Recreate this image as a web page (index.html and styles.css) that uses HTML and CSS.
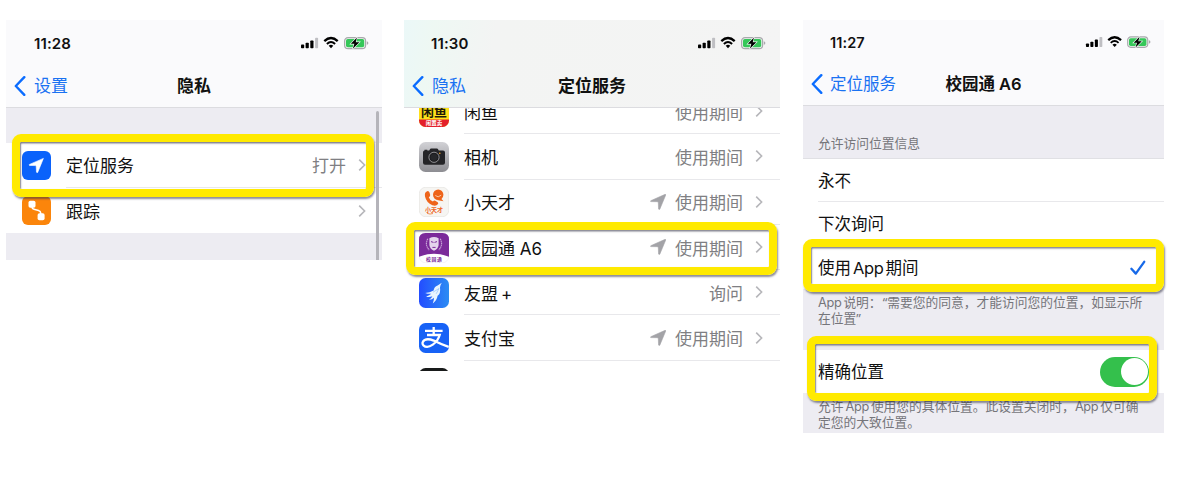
FILE: index.html
```html
<!DOCTYPE html>
<html lang="zh-CN">
<head>
<meta charset="utf-8">
<title>定位服务</title>
<link rel="stylesheet" href="styles.css">
</head>
<body>
<svg width="0" height="0" class="defs">
  <symbol id="status" viewBox="0 0 69 14">
    <rect x="1" y="8.6" width="3.2" height="3.6" rx=".8"/>
    <rect x="5.6" y="6.8" width="3.2" height="5.4" rx=".8"/>
    <rect x="10.3" y="4.4" width="3.2" height="7.8" rx=".8"/>
    <rect x="15.1" y="1.8" width="3" height="10.4" rx=".8" fill="#bfbfc3"/>
    <path d="M24.3 5.1Q31 -1 37.7 5.1" fill="none" stroke="#000" stroke-width="2.3"/>
    <path d="M26.9 7.9Q31 4.2 35.1 7.9" fill="none" stroke="#000" stroke-width="2"/>
    <path d="M28.7 9.8Q31 7.9 33.3 9.8L31 12.2Z"/>
    <rect x="44.6" y="1.6" width="21" height="11" rx="3.4" fill="#eef3ef" stroke="#a9a9ad" stroke-width="1.2"/>
    <rect x="46" y="3" width="18.2" height="8.2" rx="1.8" fill="#35c759"/>
    <path d="M66.8 5.2Q68.4 5.6 68.4 7T66.8 8.8Z" fill="#a9a9ad"/>
    <path d="M57 1.4L50.8 7.8H54.4L52.8 12.8L59.4 6.2H55.7Z" stroke="#fff" stroke-width="1.2" paint-order="stroke"/>
  </symbol>
  <symbol id="back" viewBox="0 0 12 20"><path d="M10.3 1.2L1.8 10L10.3 18.8" fill="none" stroke="#0a6cff" stroke-width="2.4" stroke-linecap="round" stroke-linejoin="round"/></symbol>
  <symbol id="chev" viewBox="0 0 8 14"><path d="M1.2 1.6L6.6 7L1.2 12.4" fill="none" stroke="#b6b6ba" stroke-width="1.6"/></symbol>
  <symbol id="loc" viewBox="0 0 16 16"><path d="M15.2 .3Q16 .2 15.7 1L9.8 15.2Q9.1 16 8.6 15.1L8.3 8.6Q8.2 7.8 7.4 7.7L.8 7.6Q0 7.2 .8 6.7Z" fill="#a3a3a7" stroke="#a3a3a7" stroke-width=".6"/></symbol>
</svg>
<main class="board">
  <section class="phone privacy">
    <header class="head">
      <div class="status"><span class="time">11:28</span><svg class="signals"><use href="#status"/></svg></div>
      <div class="nav"><span class="back"><svg><use href="#back"/></svg>设置</span><span class="title">隐私</span></div>
    </header>
    <div class="gap"></div>
    <div class="rows">
      <div class="row">
        <svg class="icon" viewBox="0 0 29 29"><rect width="29" height="29" rx="6" fill="#0a62fb"/><path d="M21.4 7.4L15.7 21.4Q15 22 14.5 21.2L14.2 15.4Q14.1 14.7 13.4 14.6L7.5 14.4Q6.7 13.9 7.5 13.4Z" fill="#fff" stroke="#fff" stroke-width=".6"/></svg>
        <div class="cell"><span>定位服务</span><span class="value">打开</span><svg class="chev"><use href="#chev"/></svg></div>
      </div>
      <div class="row">
        <svg class="icon" viewBox="0 0 29 29"><rect width="29" height="29" rx="6" fill="#fb850b"/><path d="M10 8.5V11Q10 12.8 12 13.3L16.5 14.5Q18.7 15.2 18.7 17V20" fill="none" stroke="#fff" stroke-width="1.5"/><rect x="6.5" y="4.7" width="7" height="7" rx="1.8" fill="#fff"/><rect x="15.6" y="17.2" width="7" height="7" rx="1.8" fill="#fff"/></svg>
        <div class="cell"><span>跟踪</span><svg class="chev"><use href="#chev"/></svg></div>
      </div>
    </div>
    <i class="scrollbar"></i>
    <i class="mark mark-location"></i>
  </section>

  <section class="phone services">
    <header class="head">
      <div class="status"><span class="time">11:30</span><svg class="signals"><use href="#status"/></svg></div>
      <div class="nav"><span class="back"><svg><use href="#back"/></svg>隐私</span><span class="title">定位服务</span></div>
    </header>
    <div class="viewport"><div class="rows">
      <div class="row">
        <svg class="icon" viewBox="0 0 30 30"><defs><clipPath id="r"><rect width="30" height="30" rx="6.5"/></clipPath></defs><g clip-path="url(#r)"><rect width="30" height="30" fill="#ffe11a"/><path d="M0 22.5H30V30H0Z" fill="#e3202b"/></g><text x="15" y="18.8" class="fish">闲鱼</text><text x="15" y="28.3" class="fish-sub">闲置卖</text></svg>
        <div class="cell"><span>闲鱼</span><span class="value">使用期间</span><svg class="chev"><use href="#chev"/></svg></div>
      </div>
      <div class="row">
        <svg class="icon" viewBox="0 0 30 30"><defs><linearGradient id="cg" x2="0" y2="1"><stop stop-color="#d2d2d6"/><stop offset="1" stop-color="#8d8d92"/></linearGradient></defs><rect width="30" height="30" rx="6.5" fill="url(#cg)"/><path d="M5.5 8.5V7.7H8.3V8.5H10.2L11.3 6.8Q11.6 6.4 12.2 6.4H17.8Q18.4 6.4 18.7 6.8L19.8 8.5H24Q26 8.5 26 10.5V20.8Q26 22.8 24 22.8H6Q4 22.8 4 20.8V10.5Q4 8.5 5.5 8.5Z" fill="#242427"/><circle cx="15" cy="15.3" r="5.1" fill="#1d1d20" stroke="#aaa9ad" stroke-width=".8"/><circle cx="15" cy="15.3" r="3.4" fill="#26272a"/><circle cx="20.8" cy="11.3" r=".8" fill="#f5a623"/></svg>
        <div class="cell"><span>相机</span><span class="value">使用期间</span><svg class="chev"><use href="#chev"/></svg></div>
      </div>
      <div class="row">
        <svg class="icon" viewBox="0 0 30 30"><rect x=".3" y=".3" width="29.4" height="29.4" rx="6.3" fill="#f6f5f2" stroke="#e0dfdc" stroke-width=".6"/><path d="M8.2 4.2Q9.8 3.7 10.5 5.6L11.2 8Q11.4 9.4 9.8 10.2Q10.7 13.2 13.9 14.6Q15 13.2 16.2 13.7L18.7 15.2Q19.8 16 18.8 17.3Q17 19.5 13.4 18.2Q7.5 15.8 6 9.4Q5.3 5.3 8.2 4.2Z" fill="#ee641a"/><circle cx="19.2" cy="7.7" r="5.2" fill="#ee641a"/><path d="M21.5 11L24.5 14.3L18 13Z" fill="#ee641a"/><path d="M16.3 8.5Q19 11.3 22.2 8.2" fill="none" stroke="#fbc9a5"/><text x="15" y="25.3" class="genius">小天才</text><path d="M8 26.3Q11 27.7 14 26.5" fill="none" stroke="#ee641a" stroke-width=".7"/></svg>
        <div class="cell"><span>小天才</span><svg class="loc"><use href="#loc"/></svg><span class="value">使用期间</span><svg class="chev"><use href="#chev"/></svg></div>
      </div>
      <div class="row">
        <svg class="icon" viewBox="0 0 30 30"><rect x=".2" y=".2" width="29.6" height="29.6" rx="6.4" fill="#fff" stroke="#e5e0e8" stroke-width=".4"/><path d="M0 23.8V6.5Q0 0 6.5 0H23.5Q30 0 30 6.5V23.8Q15 17.8 0 23.8Z" fill="#7b2a9a"/><path d="M10.4 5.2Q15 2.8 19.6 5.2V12Q19.2 16 15 17.7Q10.8 16 10.4 12Z" fill="#e4d5ec"/><path d="M12 8.6L14.5 9.4M18 8.6L15.5 9.4M13.4 14.4H16.6" stroke="#7b2a9a" fill="none"/><path d="M8.8 5.7Q5.4 12 10.3 17M21.2 5.7Q24.6 12 19.7 17" fill="none" stroke="#c7a2d7" stroke-width="1.2" stroke-dasharray="1.5 .5"/><text x="15.3" y="27.5" class="campus">校园通</text></svg>
        <div class="cell"><span>校园通 A6</span><svg class="loc"><use href="#loc"/></svg><span class="value">使用期间</span><svg class="chev"><use href="#chev"/></svg></div>
      </div>
      <div class="row">
        <svg class="icon" viewBox="0 0 30 30"><defs><linearGradient id="ug" x2="1" y2="0"><stop stop-color="#234dff"/><stop offset="1" stop-color="#2c8cf3"/></linearGradient></defs><rect width="30" height="30" rx="6.5" fill="url(#ug)"/><path d="M22.8 4.8L18.6 7.4Q15.2 8.4 14.6 12.6Q10.7 14.8 6.2 14.9Q8.8 16 12.3 15.8Q9.5 18.1 7.1 18.5Q10 19.7 13.4 18.2Q12.4 20.5 10.1 21.7Q13 21.8 15 19.8Q15.1 22.3 13.8 25.4Q17.9 22.3 18.6 17.8Q21.9 15.4 21 9.4Q21.2 7.1 22.8 4.8Z" fill="#e9f5ff"/><path d="M14 14.2L20 10.5L17.2 15.8" fill="none" stroke="#85bafb" stroke-width=".6"/></svg>
        <div class="cell"><span>友盟<b class="plus">+</b></span><span class="value">询问</span><svg class="chev"><use href="#chev"/></svg></div>
      </div>
      <div class="row">
        <svg class="icon" viewBox="0 0 30 30"><rect width="30" height="30" rx="6.5" fill="#1762f6"/><path d="M14.7 4V11.7M6 7.8H23.6M8 12H20.7Q18.8 18.2 13.8 21.6Q8 25.7 4.4 22.3Q2.2 19.5 5.6 17Q9 15.2 14.7 17.6Q20.5 20.7 29.7 23.8" fill="none" stroke="#fff" stroke-width="2.3"/></svg>
        <div class="cell"><span>支付宝</span><svg class="loc"><use href="#loc"/></svg><span class="value">使用期间</span><svg class="chev"><use href="#chev"/></svg></div>
      </div>
      <div class="row"><svg class="icon" viewBox="0 0 30 30"><rect width="30" height="30" rx="6.5" fill="#181a1a"/></svg></div>
    </div></div>
    <i class="mark mark-campus"></i>
  </section>

  <section class="phone detail">
    <header class="head">
      <div class="status"><span class="time">11:27</span><svg class="signals"><use href="#status"/></svg></div>
      <div class="nav"><span class="back"><svg><use href="#back"/></svg>定位服务</span><span class="title">校园通 A6</span></div>
    </header>
    <h2 class="caption">允许访问位置信息</h2>
    <div class="options">
      <div class="option">永不</div>
      <div class="option">下次询问</div>
      <div class="option"><span>使用<span class="latin">App</span>期间</span><svg class="check" viewBox="0 0 16 16"><path d="M1.4 8.8L5.8 13.6L14.2 1.8" fill="none" stroke="#1769e8" stroke-width="2.3" stroke-linecap="round" stroke-linejoin="round"/></svg></div>
    </div>
    <p class="note note-reason"><span class="latin first">App</span>说明：<span class="quote open">“</span>需要您的同意，才能访问您的位置，如显示所<br>在位置<span class="quote">”</span></p>
    <div class="options precise"><div class="option"><span>精确位置</span><span class="switch"></span></div></div>
    <p class="note">允许<span class="latin">App</span>使用您的具体位置。此设置关闭时，<span class="latin first">App</span>仅可确<br>定您的大致位置。</p>
    <i class="mark mark-while"></i>
    <i class="mark mark-precise"></i>
  </section>
</main>
</body>
</html>
```
FILE: styles.css
```css
* { box-sizing: border-box; }
body { margin: 0; background: #fff; color: #111; font: 17px/24px Inter, "Noto Sans CJK SC", sans-serif; }
.defs { position: absolute; }
.board { display: flex; align-items: flex-start; height: 500px; padding: 20px 0 0 6px; overflow: hidden; }
.phone { position: relative; flex: none; width: 376px; }
.privacy { height: 240px; background: #edecf2; }
.services { height: 351px; margin-left: 22px; background: #fff; }
.detail { width: 361px; height: 413px; margin-left: 23px; background: #edecf2; font-size: 16.5px; }

.head { height: 88px; background: #fafafc; border-bottom: 1.5px solid #dcdce0; }
.services .head { background: linear-gradient(100deg, #ebf8f8 0, #eef8f3 8%, #f3f4f3 24%, #f4f4f4 100%); }
.status { display: flex; justify-content: space-between; height: 46px; padding: 16px 13px 0 28px; }
.time { font-size: 15px; line-height: 15px; font-weight: 600; letter-spacing: .1px; }
.signals { width: 69px; height: 14px; }
.nav { display: grid; grid-template-columns: 1fr auto 1fr; align-items: center; height: 40px; white-space: nowrap; }
.back { display: flex; align-items: center; gap: 8px; padding-left: 8px; color: #1a72f2; }
.back svg { width: 12px; height: 20px; }
.title { font-weight: 600; }
.services .time { margin-left: -1px; }
.services .signals { margin-right: 1px; }

.gap { height: 35px; }
.row { display: flex; align-items: center; height: 45px; padding-left: 16px; background: #fff; }
.icon { flex: none; width: 29px; height: 29px; }
.cell { display: flex; flex: 1; align-items: center; align-self: stretch; margin-left: 15px; padding-right: 16px; border-bottom: 1.5px solid #e8e8eb; }
.cell > span { padding-top: 2px; }
.cell > :first-child { margin-right: auto; }
.value { color: #7f7f83; }
.loc { width: 16px; height: 16px; margin-right: 9px; }
.chev { width: 8px; height: 14px; margin-left: 12px; }
.privacy .row:last-child .cell { border-bottom: 0; }
.scrollbar { position: absolute; top: 91px; right: 3px; bottom: 0; width: 3px; border-radius: 2px 2px 0 0; background: #b5b4ba; }

.viewport { height: 262.5px; overflow: hidden; }
.viewport .rows { margin-top: -19px; }
.viewport .row { height: 45.3px; padding-left: 15px; }
.viewport .icon { width: 30px; height: 30px; }
.viewport .cell { padding-right: 17px; }
.viewport .cell > span { padding-top: 3px; }
.plus { margin-left: 3px; font-weight: 400; }
.fish, .fish-sub, .genius, .campus { text-anchor: middle; font-family: "Noto Sans CJK SC", sans-serif; font-weight: 700; }
.fish { font-size: 13px; fill: #1d1a08; }
.fish-sub { font-size: 5.5px; fill: #fff; }
.genius { font-size: 6px; fill: #ee641a; }
.campus { font-size: 4.8px; letter-spacing: .8px; fill: #7b2a9a; }

.detail .head { height: 85.5px; }
.detail .status { height: 44px; padding: 15px 13px 0 27px; }
.detail .time { font-size: 14.5px; }
.detail .signals { width: 66px; }
.detail .back { gap: 7px; }
.caption { display: flex; align-items: flex-end; height: 53.5px; margin: 0; padding: 0 15px 4px; border-bottom: 1px solid #e0e0e4; color: #75757a; font-size: 12.75px; line-height: 20px; font-weight: 400; }
.options { padding-left: 15px; background: #fff; }
.option { display: flex; align-items: center; justify-content: space-between; height: 43.4px; padding: 1px 18px 0 0; border-bottom: 1.5px solid #e8e8eb; }
.option:last-child { border-bottom: 0; }
.latin { margin: 0 2px; letter-spacing: -.35px; }
.latin.first { margin-left: 0; }
.quote { font-family: "Noto Sans", sans-serif; line-height: 1; }
.quote.open { margin-left: 1px; }
.check { width: 16px; height: 16px; }
.note { margin: 0; padding: 6.5px 0 0 15px; color: #75757a; font-size: 12.75px; line-height: 15.6px; white-space: nowrap; }
.note-reason { height: 60.5px; padding-top: 6px; }
.precise .option { height: 43px; padding-right: 15px; }
.switch { width: 49px; height: 30px; padding: 1.5px; border-radius: 15px; background: #34c04c; }
.switch::after { content: ""; display: block; width: 27px; height: 27px; margin-left: auto; border-radius: 50%; background: #fff; }

.mark { position: absolute; border: 8px solid #ffea00; border-radius: 9px; box-shadow: 1px 2px 2px rgba(50, 50, 70, .55), inset 1px 1.5px 1.5px rgba(50, 50, 70, .6); }
.mark-location { left: 6px; top: 114px; width: 362px; height: 63px; }
.mark-campus { left: 2px; top: 201.5px; width: 371px; height: 53.5px; }
.mark-while { left: 0; top: 219px; width: 361px; height: 53px; }
.mark-precise { left: 4px; top: 316px; width: 350px; height: 65px; }
```
